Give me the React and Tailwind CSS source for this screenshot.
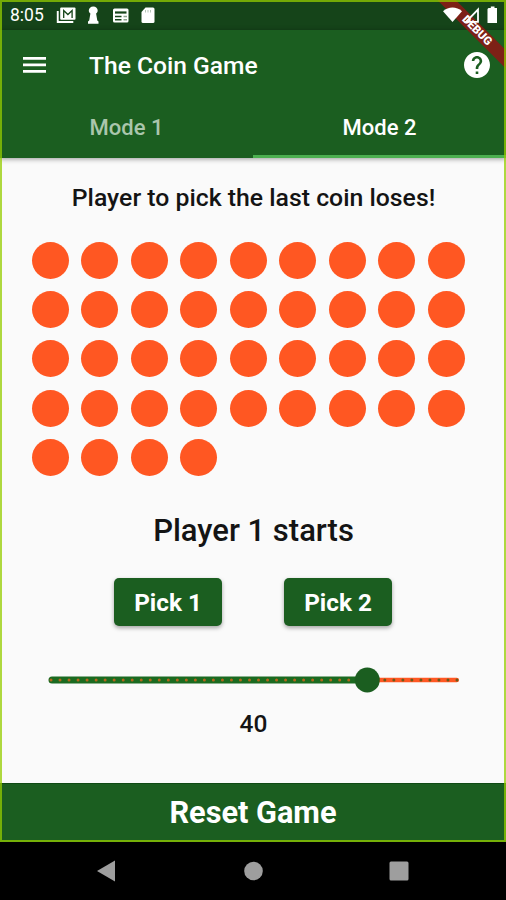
import React, { useState } from "react";

const MIN_COINS = 5;
const MAX_COINS = 50;

export default function App() {
  const [mode, setMode] = useState(2);
  const [coins, setCoins] = useState(40);

  const pick = (n) => setCoins((c) => Math.max(0, c - n));

  return (
    <div className="relative flex flex-col w-[506px] h-[900px] overflow-hidden bg-black font-['Roboto',sans-serif]">
      <div className="flex flex-col h-[842px] bg-[#fafafa]">
        <StatusBar />

        {/* App bar */}
        <header className="relative z-10 flex flex-col h-[128px] shrink-0 bg-[#1b5e20] text-white shadow-[0_1px_5px_rgba(0,0,0,0.4)]">
          <div className="flex items-center h-[70px] pl-[23px] pr-4">
            <MenuIcon />
            <h1 className="ml-[43px] pt-[2px] text-[24.6px] font-medium leading-none">
              The Coin Game
            </h1>
            <HelpIcon />
          </div>
          <div className="flex flex-1">
            <Tab label="Mode 1" active={mode === 1} onClick={() => setMode(1)} />
            <Tab label="Mode 2" active={mode === 2} onClick={() => setMode(2)} />
          </div>
        </header>

        {/* Board */}
        <main className="flex flex-1 flex-col items-center pl-px text-[#141414]">
          <p className="mt-[25px] h-[30px] text-[24.8px] font-medium leading-[30px] whitespace-nowrap">
            {mode === 2
              ? "Player to pick the last coin loses!"
              : "Player to pick the last coin wins!"}
          </p>

          <div className="mt-[28.6px] -ml-px h-[235px] w-[442px] grid grid-cols-[repeat(9,37px)] auto-rows-[37px] content-start gap-[12.45px]">
            {Array.from({ length: coins }, (_, i) => (
              <div key={i} className="rounded-full bg-[#ff5722]" />
            ))}
          </div>

          <p className="mt-[36.4px] h-[36px] text-[31px] font-medium leading-[36px]">
            Player 1 starts
          </p>

          <div className="mt-[29.5px] -ml-px flex gap-[62px]">
            <PickButton label="Pick 1" onClick={() => pick(1)} />
            <PickButton label="Pick 2" onClick={() => pick(2)} />
          </div>

          <CoinSlider value={coins} />

          <p className="mt-[14px] text-[24.5px] font-medium leading-[30px]">
            {coins}
          </p>
        </main>

        <button
          onClick={() => setCoins(40)}
          className="h-[59px] shrink-0 border-t border-[#0f4a14] bg-[#1b5e20] text-[30.7px] font-bold leading-none text-white"
        >
          Reset Game
        </button>
      </div>

      {/* Android navigation */}
      <nav className="flex flex-1 items-center">
        <svg width="506" height="58" fill="#9e9e9e">
          <path d="M97 29 115 18.5v21z" />
          <circle cx="253.5" cy="29" r="9.3" />
          <rect x="389.5" y="19.5" width="19" height="19" rx="1.5" />
        </svg>
      </nav>

      <DebugBanner />
      <div className="pointer-events-none absolute inset-x-0 top-0 z-30 h-[842px] border-2 border-[#94cc00]/75" />
    </div>
  );
}

/* ——— Bars ——— */
function StatusBar() {
  return (
    <div className="flex items-center h-[30px] shrink-0 bg-[#154419] pl-[10px] text-white">
      <span className="w-[46px] text-[17.5px] leading-none pt-[2px]">8:05</span>
      <svg width="110" height="30" fill="#fff">
        {/* mail */}
        <path d="M.8 11v12h16.500v-1.900H2.700V11z" />
        <rect x="4.200" y="7.500" width="15.300" height="12.300" rx="1" />
        <path d="M7.700 18v-7.500l4.200 4 4.200-4V18" fill="none" stroke="#154419" strokeWidth="1.300" />
        {/* pawn */}
        <path d="M37.300 6.500c2.600 0 4.400 2 4.400 4 0 1.300-.7 2.400-1.600 3l1.200 7 1.200 1v2.300H32v-2.300l1.200-1 1.200-7c-.9-.6-1.600-1.700-1.600-3 0-2 1.900-4 4.500-4z" />
        {/* news */}
        <rect x="57" y="8.500" width="15.500" height="14" rx="1.500" />
        <path d="M59 12.500h11.500" stroke="#154419" strokeWidth="2.200" />
        <path d="M59 16.500h6.500M59 19.800h6.500" stroke="#154419" strokeWidth="1.500" />
        <path d="M67.500 16.500h3.500M67.500 19.800h3.500" stroke="#8da48e" strokeWidth="1.500" />
        {/* sd card */}
        <path d="M89.500 7.500h7.500q1.500 0 1.500 1.500v12.500q0 1.500-1.500 1.500H87q-1.500 0-1.500-1.500V12z" />
        <path d="M89.500 10v2.500M92 10v2.500M94.500 10v2.500" stroke="#b5c5b6" strokeWidth="1" />
      </svg>
      <svg className="relative z-[25] ml-auto" width="66" height="30" fill="#fff">
        <path d="M12.500 22 3 11.200c5.500-5 13.500-5 19 0z" />
        <path d="M38 9.500v12.300H26z" fill="none" stroke="#fff" strokeWidth="1.800" />
        <path d="M48.500 8h2.300V6.500h3.700V8H57v15H47.500V9z" />
      </svg>
    </div>
  );
}

function Tab({ label, active, onClick }) {
  return (
    <button
      onClick={onClick}
      className={`flex-1 text-[22px] font-medium leading-none border-b-[3px] ${
        active
          ? "border-[#4caf50] text-white"
          : "border-transparent text-[#aac6ac]"
      }`}
    >
      {label}
    </button>
  );
}

function DebugBanner() {
  return (
    <div className="absolute right-0 top-0 z-20 size-[68px] overflow-hidden">
      <div className="absolute left-[-21px] top-[24px] flex h-[13px] w-[120px] rotate-45 items-center justify-center bg-[#831d16]/95 text-[11.5px] font-black leading-none text-white">
        DEBUG
      </div>
    </div>
  );
}

/* ——— Controls ——— */
function PickButton({ label, onClick }) {
  return (
    <button
      onClick={onClick}
      className="h-[48px] w-[108px] rounded-[5px] bg-[#1b5e20] pt-[2px] text-[24.3px] font-bold leading-none text-white shadow-[0_2px_4px_rgba(0,0,0,0.35)]"
    >
      {label}
    </button>
  );
}

function CoinSlider({ value }) {
  const steps = MAX_COINS - MIN_COINS;
  const xAt = (i) => 3 + (i * 406) / steps;
  const thumb = xAt(value - MIN_COINS);

  return (
    <svg className="mt-[39px]" width="412" height="30">
      <rect x="2" y="12.700" width="409" height="4.600" rx="2.300" fill="#ff5722" />
      <rect x="0.500" y="11.500" width={thumb} height="7" rx="3.500" fill="#1b6a20" />
      {Array.from({ length: steps + 1 }, (_, i) => (
        <circle
          key={i}
          cx={xAt(i)}
          cy="15"
          r="1.500"
          fill={xAt(i) < thumb ? "#b5651c" : "#6b5a18"}
        />
      ))}
      <circle cx={thumb + 0.5} cy="15" r="12.500" fill="#1b5e20" />
    </svg>
  );
}

/* ——— Icons ——— */
function MenuIcon() {
  return (
    <svg width="23" height="16" fill="#fff">
      <path d="M0 0h23v2.700H0zM0 6.500h23v2.700H0zM0 13h23v2.700H0z" />
    </svg>
  );
}

function HelpIcon() {
  return (
    <svg className="ml-auto" width="26" height="26" viewBox="2 2 20 20" fill="#fff">
      <path d="M12 2C6.480 2 2 6.480 2 12s4.480 10 10 10 10-4.480 10-10S17.520 2 12 2zm1 17h-2v-2h2v2zm2.070-7.750-.9.920C13.450 12.900 13 13.500 13 15h-2v-.5c0-1.100.450-2.100 1.170-2.830l1.240-1.260c.370-.360.590-.860.590-1.410 0-1.100-.9-2-2-2s-2 .9-2 2H8c0-2.210 1.790-4 4-4s4 1.790 4 4c0 .880-.360 1.680-.930 2.250z" />
    </svg>
  );
}
